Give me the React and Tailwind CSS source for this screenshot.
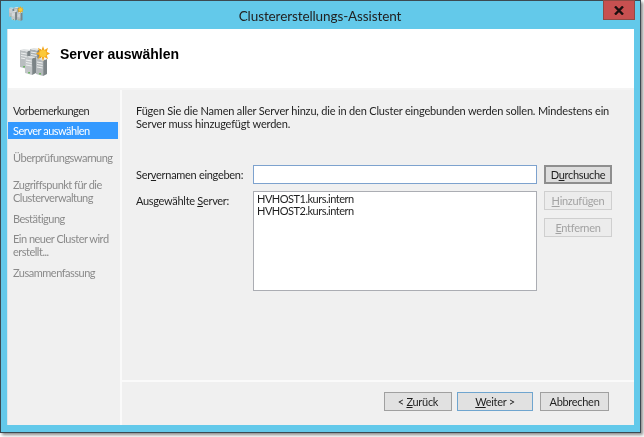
import React from 'react';

// one rack of the server stack: light front, dark side, a few drive slots
const Rack = ({ x, y, w, h, front = '#b9bec0', side = '#7c8487' }) => (
  <g>
    <path d={`M${x} ${y} L${x + w * 0.65} ${y + 1.5} L${x + w * 0.65} ${y + h} L${x} ${y + h - 2} Z`} fill={front} />
    <path d={`M${x + w * 0.65} ${y + 1.5} L${x + w} ${y} L${x + w} ${y + h - 2} L${x + w * 0.65} ${y + h} Z`} fill={side} />
    <path d={`M${x} ${y} L${x + w * 0.35} ${y - 1} L${x + w} ${y} L${x + w * 0.65} ${y + 1.5} Z`} fill="#dfe2e3" />
    <path
      d={`M${x + 1} ${y + 3} L${x + w * 0.6} ${y + 4} M${x + 1} ${y + 5.5} L${x + w * 0.6} ${y + 6.5} M${x + 1} ${y + 8} L${x + w * 0.6} ${y + 9}`}
      stroke="#eef0f0"
      strokeWidth="1"
    />
    <rect x={x + w * 0.3} y={y + h - 3} width="1.5" height="1.5" fill="#58b04a" />
  </g>
);

const ServerIcon = ({ size }) => (
  <svg width={size} height={size} viewBox="0 0 30 30">
    <Rack x={0} y={4} w={11} h={19} />
    <Rack x={10} y={3} w={11} h={18} front="#a9afb1" />
    <Rack x={5} y={11} w={11} h={18} front="#c2c6c8" />
    <Rack x={16} y={13} w={11} h={17} front="#b4b9bb" />
    {/* sun */}
    <path
      d="M23 0 L24.4 4 L28 1.8 L26.8 5.8 L30 7.5 L26.8 9.2 L28 13.2 L24.4 11 L23 15 L21.6 11 L18 13.2 L19.2 9.2 L16 7.5 L19.2 5.8 L18 1.8 L21.6 4 Z"
      fill="#f4a81c"
    />
    <circle cx="23" cy="7.5" r="3.5" fill="#fbc93a" />
  </svg>
);

const steps = [
  { label: 'Vorbemerkungen', className: 'text-[#2e2e2e] mt-[12px]' },
  { label: 'Server auswählen', className: 'bg-[#3399ff] text-white mt-[3px]' },
  { label: 'Überprüfungswarnung', className: 'text-[#8a8a8a] mt-[10px]' },
  { label: 'Zugriffspunkt für die Clusterverwaltung', className: 'text-[#8a8a8a] mt-[10px]' },
  { label: 'Bestätigung', className: 'text-[#8a8a8a] mt-[4px]' },
  { label: 'Ein neuer Cluster wird erstellt...', className: 'text-[#8a8a8a] mt-[3px]' },
  { label: 'Zusammenfassung', className: 'text-[#8a8a8a] mt-[4px]' },
];

const Button = ({ children, className = '', disabled }) => (
  <button
    className={`h-[19px] bg-[#e1e1e1] border text-[11px] tracking-[-0.3px] leading-none ${
      disabled ? 'border-[#cfcfcf] bg-[#ececec] text-[#a3a3a3]' : 'border-[#a0a0a0] text-[#1f1f1f]'
    } ${className}`}
  >
    {children}
  </button>
);

export default function App() {
  return (
    <div className="w-[644px] h-[437px] bg-white font-['Lato','Liberation_Sans',sans-serif] overflow-hidden">
      <div className="w-[641px] h-[433px] flex flex-col border border-[#3c4a52] bg-[#63c9ea] shadow-[2px_2px_3px_#8a8a8a] blur-[0.3px]">
        {/* title bar */}
        <div className="h-[28px] shrink-0 flex items-start pl-[8px] pr-[5px]">
          <div className="mt-[5px]"><ServerIcon size={15} /></div>
          <div className="flex-1 text-center text-[13.5px] tracking-[-0.1px] leading-[30px] pl-[13px] text-[#222222]">
            Clustererstellungs-Assistent
          </div>
          <div className="w-[32px] h-[20px] -mt-px bg-[#c75050] border border-[#8f4a44] flex items-center justify-center">
            <svg width="10" height="9" viewBox="0 0 10 9">
              <path d="M1 0.5 L9 8.5 M9 0.5 L1 8.5" stroke="#1a0f0f" strokeWidth="2.4" />
            </svg>
          </div>
        </div>

        {/* client area */}
        <div className="mx-[6px] h-[396px] flex flex-col bg-[#f0f0f0] border-l border-[#d8e6ec]">
          <div className="h-[61px] shrink-0 bg-white flex items-center pl-[12px] pb-[9px] border-b-2 border-[#f4f4f4]">
            <div className="mt-[13px]"><ServerIcon size={30} /></div>
            <span className="ml-[10px] text-[14px] font-bold text-black font-['Liberation_Sans',sans-serif]">Server auswählen</span>
          </div>

          <div className="flex-1 flex min-h-0">
            {/* left step list */}
            <div className="w-[114px] shrink-0 border-r-2 border-[#fafafa] pr-[2px] text-[11px] tracking-[-0.5px] leading-[13px]">
              {steps.map((s) => (
                <div key={s.label} className={`pl-[5px] pr-[4px] py-[2px] ${s.className}`}>
                  {s.label}
                </div>
              ))}
            </div>

            <div className="flex-1 flex flex-col min-w-0">
              {/* page content */}
              <div className="flex-1 pl-[14px] pr-[20px] pt-[14px] text-[11px] tracking-[-0.18px] text-[#1f1f1f] leading-[13px]">
                <p className="w-[480px]">
                  Fügen Sie die Namen aller Server hinzu, die in den Cluster eingebunden werden sollen. Mindestens ein
                  Server muss hinzugefügt werden.
                </p>
                <div className="mt-[35px] flex tracking-[-0.3px]">
                  <div className="w-[117px] shrink-0 whitespace-nowrap">
                    <div className="h-[26px] pt-[3px]">Ser<u>v</u>ernamen eingeben:</div>
                    <div className="pt-[3px]">Ausgewählte <u>S</u>erver:</div>
                  </div>
                  <div className="w-[284px] shrink-0">
                    <div className="h-[19px] bg-white border border-[#7da2ce]" />
                    <div className="mt-[7px] h-[100px] bg-white border border-[#abadb3] pl-[3px] pt-[1px] leading-[12px] tracking-[-0.5px] text-[#1f1f1f]">
                      <div>HVHOST1.kurs.intern</div>
                      <div>HVHOST2.kurs.intern</div>
                    </div>
                  </div>
                  <div className="ml-[7px] w-[68px] shrink-0 flex flex-col">
                    <Button className="!bg-[#dddddd] !border-[#8e8e8e] border-2">D<u>u</u>rchsuche</Button>
                    <Button disabled className="mt-[7px]"><u>H</u>inzufügen</Button>
                    <Button disabled className="mt-[8px]"><u>E</u>ntfernen</Button>
                  </div>
                </div>
              </div>

              {/* footer buttons */}
              <div className="h-[45px] shrink-0 border-t-2 border-[#fafafa] flex pt-[10px] pl-[262px]">
                <Button className="w-[68px]">&lt; <u>Z</u>urück</Button>
                <Button className="w-[76px] ml-[5px] !border-[#6fa5cf]"><u>W</u>eiter &gt;</Button>
                <Button className="w-[69px] ml-[7px]">Abbrechen</Button>
              </div>
            </div>
          </div>
        </div>
      </div>
    </div>
  );
}
